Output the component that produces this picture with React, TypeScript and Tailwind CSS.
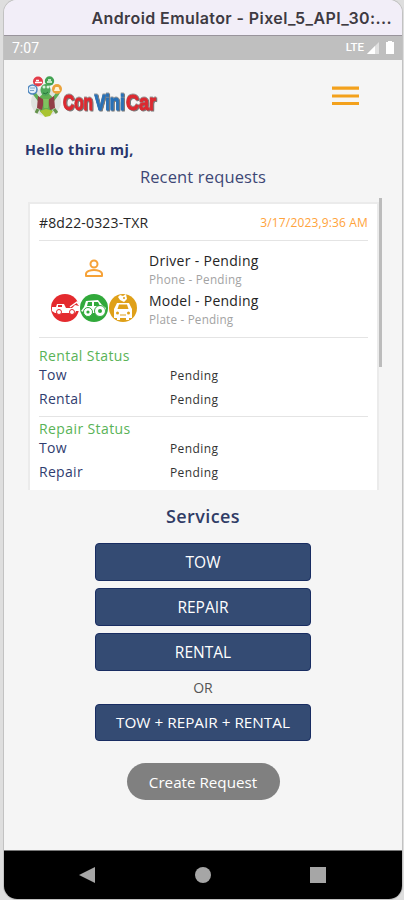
import React from "react";

const sans = "font-['Open_Sans','Noto_Sans',sans-serif]";

function Logo() {
  return (
    <svg width="134" height="44" viewBox="0 0 134 44" aria-label="ConViniCar">
      <ellipse cx="18" cy="26" rx="15" ry="14" fill="#dfe3df" />
      <path d="M6 17l6 8M30 17l-6 8" stroke="#5fae58" strokeWidth="3.5" strokeLinecap="round" />
      <ellipse cx="18" cy="28" rx="8" ry="11" fill="#63b052" />
      <ellipse cx="17.500" cy="14" rx="5" ry="6" fill="#4fa85a" />
      <circle cx="16" cy="11" r="1.500" fill="#d9f2dd" />
      <circle cx="20" cy="11" r="1.500" fill="#d9f2dd" />
      <path d="M15 17q3 2 5-1" stroke="#28733a" fill="none" />
      <path d="M10 20l6 4-2 10-5-2zM26 20l-6 4 2 10 5-2z" fill="#913e45" />
      <path d="M15 23h6l-1 9h-4z" fill="#80c35f" />
      <path d="M12 35l6-2 7 2-3 5-5 1z" fill="#a9c431" />
      <path d="M10 33l-2 4M26 33l3 4" stroke="#65934c" strokeWidth="3" />
      <circle cx="10" cy="5.500" r="5" fill="#e33b48" />
      <path d="M7 6.500h7M8 4.500h3" stroke="#fff" strokeWidth="1.500" />
      <circle cx="21.500" cy="5" r="4.700" fill="#43a253" />
      <path d="M19 6h5M20 4h3" stroke="#eaffed" strokeWidth="1.300" />
      <circle cx="4.500" cy="13.500" r="4.500" fill="#e4effa" stroke="#4d85bd" strokeWidth="1.500" />
      <path d="M2 12h5M2 14.500h4" stroke="#7da3c9" />
      <circle cx="29" cy="13" r="5" fill="#eba33c" />
      <path d="M26 15l1.500-4h3l1.500 4z" fill="#fff3d6" />
      <g
        fontFamily="'Liberation Sans', sans-serif"
        fontWeight="700"
        fontSize="22.500"
        strokeWidth="1"
        className="[filter:drop-shadow(0_-1px_0_#999)_drop-shadow(1px_1px_0_#777)]"
      >
        <text x="35" y="34" textLength="30" lengthAdjust="spacingAndGlyphs" fill="#dd2930" stroke="#dd2930">Con</text>
        <text x="66.500" y="34" textLength="30" lengthAdjust="spacingAndGlyphs" fill="#2871b8" stroke="#2871b8">Vini</text>
        <text x="98" y="34" textLength="30" lengthAdjust="spacingAndGlyphs" fill="#dd2930" stroke="#dd2930">Car</text>
      </g>
    </svg>
  );
}

function ServiceIcons() {
  return (
    <svg width="86" height="30" viewBox="0 0 86 30" fill="none">
      <circle cx="14" cy="15" r="14" fill="#e42a2e" />
      <circle cx="43" cy="15" r="14" fill="#31a93b" />
      <circle cx="72" cy="15" r="14" fill="#dfa019" />
      <path d="M1 14h4l1-3h7l2 4h6l3-3 4 1v5h-3l-1 2H4l-3-2z" fill="#fff" />
      <path d="M7 12h4v2H7z" fill="#e42a2e" />
      <circle cx="8" cy="19" r="2.500" fill="#fff" stroke="#e42a2e" />
      <circle cx="21" cy="19" r="2.500" fill="#fff" stroke="#e42a2e" />
      <path d="M19 14l7-5 2 3" stroke="#fff" strokeWidth="1.500" />
      <path d="M30 18l3-4 2-6 12-1 4 5 4 3v3l-4 2H35z" fill="#fff" />
      <path d="M37 9h4v4h-5zM43 9h4l2 4h-6z" fill="#31a93b" />
      <circle cx="37" cy="19" r="4.500" fill="#fff" stroke="#31a93b" />
      <circle cx="49" cy="18" r="5.500" fill="#fff" stroke="#31a93b" />
      <circle cx="37" cy="19" r="1.600" fill="#31a93b" />
      <circle cx="49" cy="18" r="2" fill="#31a93b" />
      <path d="M63 16l3-6h12l3 6v9h-3v2h-3v-2h-6v2h-3v-2h-3z" fill="#fff" />
      <path d="M68 11.500h8l1.500 4.500h-11z" fill="#dfa019" />
      <path d="M69 22h6" stroke="#dfa019" />
      <circle cx="66.500" cy="20" r="1.500" fill="#dfa019" />
      <circle cx="77.500" cy="20" r="1.500" fill="#dfa019" />
      <path d="M69 2l3 1 3-2 1 5-3 3-4-2-2-3z" fill="#fff" />
      <circle cx="73" cy="5" r="1" fill="#dfa019" />
    </svg>
  );
}

function StatusRow({ label }: { label: string }) {
  return (
    <div className="flex h-6">
      <span className="w-[131px] text-[14px] leading-[24px] tracking-[0.3px] text-[#303d70]">{label}</span>
      <span className="text-[12px] leading-[25px] tracking-[0.4px] text-[#333]">Pending</span>
    </div>
  );
}

function StatusGroup({ title, rows }: { title: string; rows: string[] }) {
  return (
    <>
      <div className="h-4 text-[14px] leading-[18px] tracking-[0.4px] text-[#59b357]">{title}</div>
      {rows.map((row) => <StatusRow key={row} label={row} />)}
    </>
  );
}

function ServiceButton({ children }: { children: React.ReactNode }) {
  return (
    <button className="flex h-[37.500px] w-[216px] shrink-0 items-center justify-center rounded-[4px] border border-[#192d62] bg-[#344b73] pt-px text-[15.500px] text-white">
      {children}
    </button>
  );
}

export default function App() {
  return (
    <div className={`${sans} h-[900px] w-[404px] overflow-hidden bg-[#dedede] pl-1 pr-[2px]`}>
      <div className="flex h-[899px] w-[398px] flex-col overflow-hidden rounded-[13px] bg-[#f5f5f5] ring-1 ring-[#c2c2c2]">
        <header className="flex h-9 shrink-0 items-center justify-end border-b border-[#99949c] bg-[#f2eef8] pr-[10px] font-['Inter',sans-serif] text-[16px] font-semibold tracking-[0.4px] text-[#3e3a42]">
          <span className="whitespace-nowrap">Android Emulator - Pixel_5_API_30:...</span>
        </header>
        <div className="flex h-6 shrink-0 items-center bg-[#bfbfbf] pl-[8px] pr-[7px] font-['Roboto',sans-serif] text-[14px] text-white">
          <span>7:07</span>
          <span className="ml-auto text-[11.500px] font-medium">LTE</span>
          <svg className="ml-[2px]" width="29" height="16" viewBox="0 0 29 16">
            <path d="M1 14L13 2v12z" fill="#e0e0e0" />
            <path d="M1 14L9 6v8z" fill="#fff" />
            <path d="M20 2h2V1h4v1h2v12h-8z" fill="#fff" />
          </svg>
        </div>

        <div className="flex h-[79px] shrink-0 items-start justify-between pl-6 pr-[43px] pt-4">
          <Logo />
          <svg className="mt-[10px]" width="27" height="20" viewBox="0 0 27 20">
            <path d="M0 2.200h27M0 10h27M0 17.500h27" stroke="#f3a11c" strokeWidth="3.200" />
          </svg>
        </div>
        <h1 className="h-[26px] shrink-0 pl-[21px] text-[14.300px] font-bold leading-[22px] tracking-[0.4px] text-[#29366d]">Hello thiru mj,</h1>
        <h2 className="h-[33px] shrink-0 text-center text-[16.500px] leading-6 tracking-[0.15px] text-[#3d4775]">Recent requests</h2>

        <div className="flex h-[292px] shrink-0 pl-6">
          <section className="mt-1 h-[288px] w-[351px] overflow-hidden border-x-2 border-t-2 border-[#ebebeb] bg-white px-[9px]">
            <div className="flex h-[37px] items-center justify-between border-b border-[#e4e4e4]">
              <span className="text-[14px] tracking-[0.15px] text-[#252525]">#8d22-0323-TXR</span>
              <span className="pt-px text-[12px] tracking-[0.15px] text-[#ffa33b]">3/17/2023,9:36 AM</span>
            </div>
            <div className="flex h-[97px] border-b border-[#e4e4e4] pt-[11px]">
              <div className="flex w-[110px] flex-col items-center">
                <svg className="mt-[6px] shrink-0" width="20" height="22" viewBox="0 0 20 22" fill="none" stroke="#f6a238" strokeWidth="2">
                  <circle cx="10" cy="6" r="3.500" />
                  <path d="M2 18v-2c0-3 5-4 8-4s8 1 8 4v2z" strokeLinejoin="round" />
                </svg>
                <div className="mt-[13px] w-[86px]"><ServiceIcons /></div>
              </div>
              <div>
                <div className="h-[20px] text-[14px] leading-[18px] tracking-[0.3px] text-[#242424]">Driver - Pending</div>
                <div className="h-[20px] text-[11.700px] leading-[15px] tracking-[0.25px] text-[#a3a3a3]">Phone - Pending</div>
                <div className="h-[20px] text-[14px] leading-[18px] tracking-[0.25px] text-[#242424]">Model - Pending</div>
                <div className="text-[11.700px] leading-[15px] tracking-[0.2px] text-[#a3a3a3]">Plate - Pending</div>
              </div>
            </div>
            <div className="h-[79px] border-b border-[#e4e4e4] pt-[9px]">
              <StatusGroup title="Rental Status" rows={["Tow", "Rental"]} />
            </div>
            <div className="pt-[3px]">
              <StatusGroup title="Repair Status" rows={["Tow", "Repair"]} />
            </div>
          </section>
          <div className="h-[169px] w-[3px] bg-[#bcbcbc]" />
        </div>

        <main className="flex flex-1 flex-col items-center">
          <h2 className="mt-[14px] h-[39px] text-[18px] font-semibold leading-6 tracking-[0.4px] text-[#303c66]">Services</h2>
          <div className="flex flex-col gap-[7.500px]">
            <ServiceButton>TOW</ServiceButton>
            <ServiceButton>REPAIR</ServiceButton>
            <ServiceButton>RENTAL</ServiceButton>
          </div>
          <div className="h-[33px] text-[14px] leading-[33px] text-[#555]">OR</div>
          <ServiceButton><span className="text-[15.300px]">TOW + REPAIR + RENTAL</span></ServiceButton>
          <button className="mt-[22px] h-[37px] w-[153px] rounded-full bg-[#808080] pt-px text-[15.200px] text-white">Create Request</button>
        </main>

        <nav className="flex h-[49px] shrink-0 items-center border-t border-[#777] bg-black pl-[75px] pr-[76px]">
          <svg className="-mt-px" width="247" height="16" viewBox="0 0 247 16" fill="#a6a6a6">
            <path d="M0 8L16 0v16z" />
            <circle cx="124" cy="8" r="8" />
            <path d="M231 0h16v16h-16z" />
          </svg>
        </nav>
      </div>
    </div>
  );
}
